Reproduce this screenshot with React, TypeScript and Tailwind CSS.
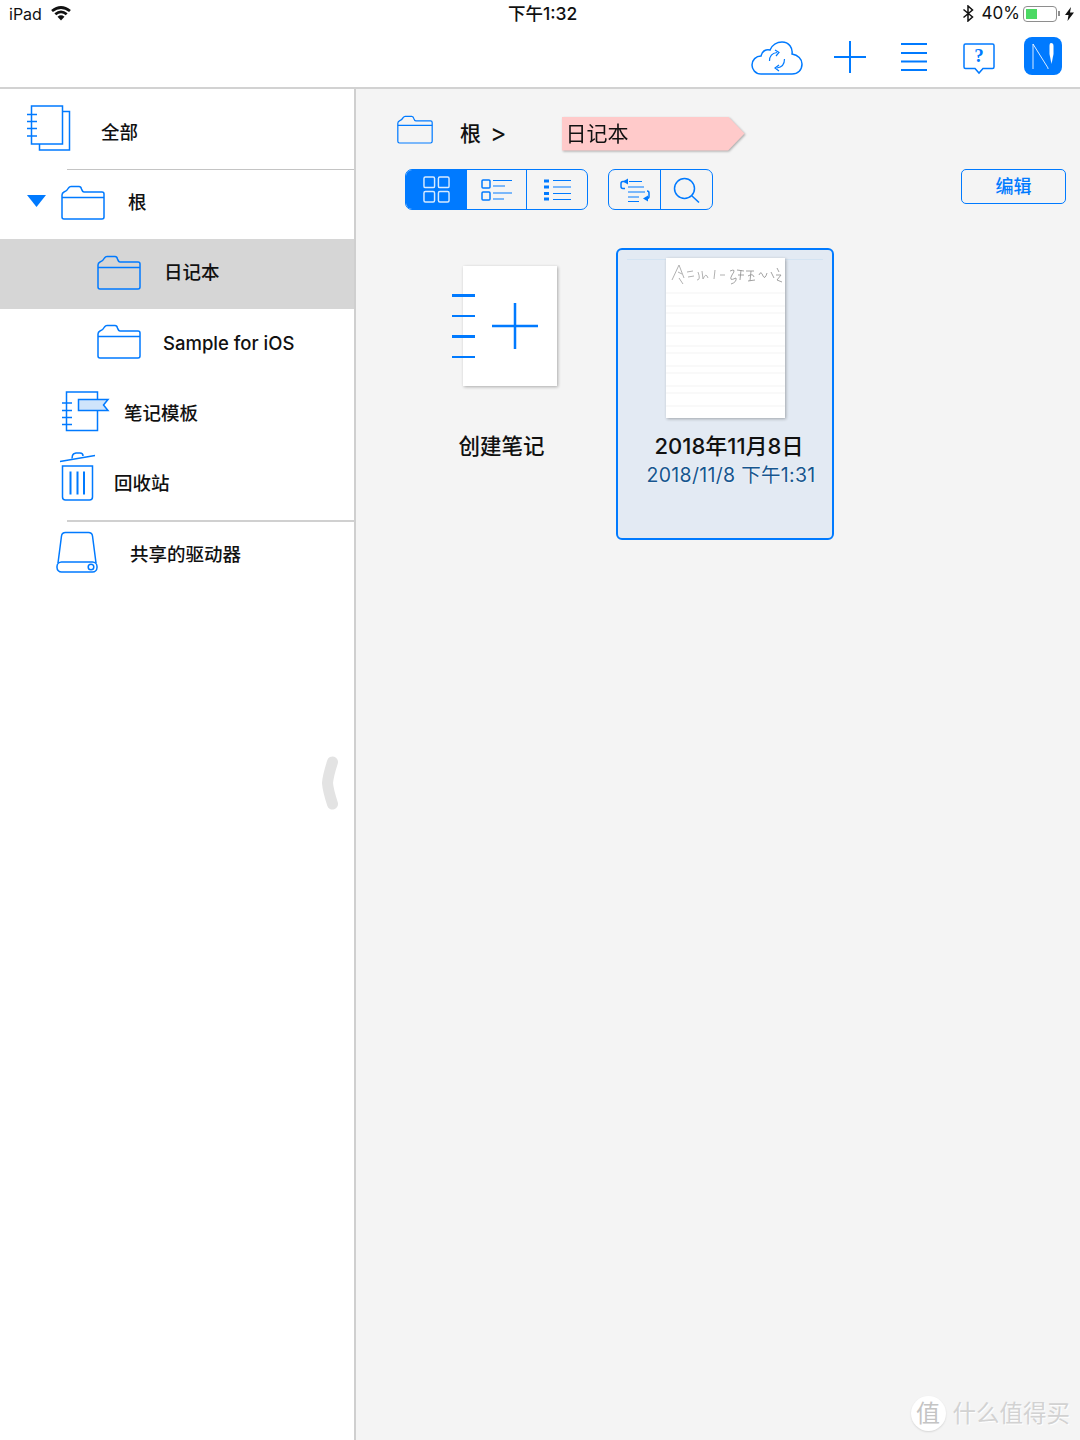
import type { ReactNode } from "react";

const BLUE = "#007aff";

function Icon({ w, h, children, className = "" }: { w: number; h: number; children: ReactNode; className?: string }) {
    return (
        <svg width={w} height={h} viewBox={`0 0 ${w} ${h}`} fill="none" stroke={BLUE} strokeWidth={1.5} className={`shrink-0 ${className}`}>
            {children}
        </svg>
    );
}

function Folder({ w = 44, h = 35, className = "" }: { w?: number; h?: number; className?: string }) {
    return (
        <svg width={w} height={h} viewBox="0 0 44 35" fill="none" stroke={BLUE} strokeWidth={1.5} className={`shrink-0 ${className}`}>
            <path d="M1 10 L1 32 Q1 34 3 34 L41 34 Q43 34 43 32 L43 9 Q43 7 41 7 L23 7 Q21.500 7 20.500 4 Q20 1.500 18 1.500 L10 1.500 Q8.500 1.500 7.500 3 Q6 6 3 7 Q1 8 1 10 Z" strokeLinejoin="round" />
            <path d="M1 12.500 L43 12.500" />
        </svg>
    );
}

function AllNotes() {
    return (
        <Icon w={46} h={46} className="mb-[2px]">
            <rect x="6.500" y="1" width="31" height="38" />
            <path d="M37.500 6.500 L44.500 6.500 L44.500 45 L14.500 45 L14.500 39" />
            <path d="M2 9.500 H12 M2 16.500 H12 M2 23.500 H12 M2 31 H12" />
        </Icon>
    );
}

function Template() {
    return (
        <Icon w={50} h={41} className="mb-[6px]">
            <path d="M37.500 8.500 V1 H6.500 V39.500 H37.500 V19.500" />
            <path d="M2 12 H12 M2 19.500 H12 M2 26.500 H12 M2 33.500 H12" />
            <path d="M18.500 8.500 L48 8.500 L43.500 14 L48 19.500 L18.500 19.500 Z" fill="#cfe4fb" />
        </Icon>
    );
}

function Trash() {
    return (
        <Icon w={37} h={50} className="mb-[16px]">
            <path d="M1 9.500 L36 3.500" />
            <path d="M13 6.500 L13.500 3.500 Q14 1.500 17 1 L21 1 Q24 1 24 4" />
            <path d="M3.500 14 L33.500 14 L33.500 45 Q33.500 48 30.500 48 L6.500 48 Q3.500 48 3.500 45 Z" />
            <path d="M11.500 19.500 V42.500 M18.500 19.500 V42.500 M25 19.500 V42.500" strokeWidth={2} />
        </Icon>
    );
}

function Drive() {
    return (
        <Icon w={42} h={42} className="mb-[6px]">
            <path d="M2 32 L5.500 5 Q6 1.500 9.500 1.500 L32.500 1.500 Q36 1.500 36.500 5 L40 32" />
            <rect x="1" y="31" width="40" height="10" rx="4.500" />
            <circle cx="35" cy="36" r="2.800" />
        </Icon>
    );
}

function SideRow({ icon, label, rowClass, textClass = "" }: { icon: ReactNode; label: string; rowClass: string; textClass?: string }) {
    return (
        <div className={`flex items-center ${rowClass}`}>
            {icon}
            <span className={`text-[18.500px] font-medium leading-none text-[#111] ${textClass}`}>{label}</span>
        </div>
    );
}

function Sidebar() {
    return (
        <aside className="relative w-[356px] shrink-0 border-r-2 border-[#cfcfcf] bg-white">
            <SideRow icon={<AllNotes />} label="全部" rowClass="h-[80px] pl-[25px] gap-[30px]" textClass="mt-[6px]" />
            <div className="ml-[67px] h-[1px] bg-[#c4c4c4]" />
            <div className="flex h-[69px] items-center pl-[27px]">
                <svg width="19" height="12" viewBox="0 0 19 12" className="mb-[7px] mr-[15px] shrink-0">
                    <path d="M0 0 H19 L9.500 12 Z" fill={BLUE} />
                </svg>
                <Folder className="mb-[5px]" />
                <span className="mb-[4px] ml-[23px] text-[18.500px] font-medium leading-none text-[#111]">根</span>
            </div>
            <SideRow icon={<Folder className="mb-[4px]" />} label="日记本" rowClass="h-[70px] pl-[97px] gap-[23px] bg-[#d6d6d6]" textClass="mb-[4px]" />
            <SideRow icon={<Folder className="mb-[6px]" />} label="Sample for iOS" rowClass="h-[70px] pl-[97px] gap-[22px]" textClass="mb-[2px]" />
            <SideRow icon={<Template />} label="笔记模板" rowClass="h-[70px] pl-[60px] gap-[14px]" textClass="mb-[2px]" />
            <SideRow icon={<Trash />} label="回收站" rowClass="h-[71px] pl-[59px] gap-[18px]" textClass="mb-[2px]" />
            <div className="ml-[67px] h-[2px] bg-[#d0d0d0]" />
            <SideRow icon={<Drive />} label="共享的驱动器" rowClass="h-[65px] pl-[56px] gap-[32px]" />
            <svg width="18" height="54" viewBox="0 0 18 54" className="absolute left-[321px] top-[667px]">
                <path d="M11.500 6 Q7 20 6.500 27 Q7 34 11.500 48" fill="none" stroke="#e3e3e3" strokeWidth="11" strokeLinecap="round" />
            </svg>
        </aside>
    );
}

function ViewTabs() {
    return (
        <div className="flex h-[41px] w-[183px] overflow-hidden rounded-[7px] border-[1.500px] border-[#007aff]">
            <div className="flex w-[60px] items-center justify-center bg-[#007aff]">
                <svg width="27" height="27" viewBox="0 0 28 28" fill="none" stroke="#fff" strokeOpacity=".85" strokeWidth="1.500">
                    <rect x="1" y="1" width="11" height="11" rx="1.500" />
                    <rect x="16" y="1" width="11" height="11" rx="1.500" />
                    <rect x="1" y="16" width="11" height="11" rx="1.500" />
                    <rect x="16" y="16" width="11" height="11" rx="1.500" />
                </svg>
            </div>
            <div className="flex w-[60px] items-center justify-center border-l-[1.500px] border-[#007aff]">
                <Icon w={32} h={24}>
                    <rect x="1" y="2" width="8" height="8" rx="1" />
                    <rect x="1" y="14" width="8" height="8" rx="1" />
                    <path d="M12 2.500 H31 M12 8 H24 M12 15 H31 M12 21 H23" strokeWidth={1.2} />
                </Icon>
            </div>
            <div className="flex flex-1 items-center justify-center border-l-[1.500px] border-[#007aff]">
                <Icon w={27} h={22}>
                    <path d="M0 2 H5 M0 8 H5 M0 14.500 H5 M0 20 H5" strokeWidth={3} />
                    <path d="M9 1.500 H27 M9 8 H27 M9 14.500 H27 M9 20.500 H27" strokeWidth={1.2} />
                </Icon>
            </div>
        </div>
    );
}

function ToolTabs() {
    return (
        <div className="ml-[20px] flex h-[41px] w-[105px] overflow-hidden rounded-[7px] border-[1.500px] border-[#007aff]">
            <div className="flex w-[51px] items-center justify-center">
                <Icon w={30} h={26}>
                    <path d="M8 1.500 L3 4.500 L8 7.500 Z" fill={BLUE} stroke="none" />
                    <path d="M6 4.500 H3 Q1 4.500 1 6.500 V9.500 Q1 11.500 3 11.500 H5" />
                    <path d="M9 4.500 H22 M8 10 H24 M8 15 H25 M8 20 H19 M8 24.500 H19" strokeWidth={1.2} />
                    <path d="M23 18.500 L28 21.500 L23 24.500 Z" fill={BLUE} stroke="none" transform="rotate(180 25.500 21.500)" />
                    <path d="M25 21.500 H27 Q29 21.500 29 19.500 V16 Q29 14 27 14" />
                </Icon>
            </div>
            <div className="flex flex-1 items-center justify-center border-l-[1.500px] border-[#007aff]">
                <Icon w={27} h={26}>
                    <circle cx="11.500" cy="11.500" r="10" />
                    <path d="M18.500 18.500 L26 25.500" />
                </Icon>
            </div>
        </div>
    );
}

function NewNote() {
    return (
        <div className="ml-[-16px] mt-[18px] flex w-[120px] flex-col items-center">
            <div className="relative ml-[14px] flex h-[120px] w-[94px] items-center justify-center bg-white shadow-[1px_1px_3px_rgba(0,0,0,.3)]">
                <div className="absolute left-[-11px] top-[28px] flex flex-col gap-[18px]">
                    <div className="h-[2.500px] w-[23px] bg-[#007aff]" />
                    <div className="h-[2.500px] w-[23px] bg-[#007aff]" />
                    <div className="h-[2.500px] w-[23px] bg-[#007aff]" />
                    <div className="h-[2.500px] w-[23px] bg-[#007aff]" />
                </div>
                <svg width="46" height="46" viewBox="0 0 46 46" className="ml-[10px]">
                    <path d="M0 23 H46 M23 0 V46" stroke={BLUE} strokeWidth="2.500" />
                </svg>
            </div>
            <span className="ml-[-3px] mt-[50px] text-[21.500px] font-medium leading-none text-[#111]">创建笔记</span>
        </div>
    );
}

function NoteCard() {
    return (
        <div className="relative ml-[53px] flex h-[292px] w-[218px] flex-col items-center rounded-[6px] border-2 border-[#007aff] bg-[#e3eaf3]">
            <div className="absolute left-[9px] right-[9px] top-[9px] h-[1px] bg-[#d3e3f2]" />
            <div className="relative mt-[8px] h-[160px] w-[119px] bg-white shadow-[1px_1px_3px_rgba(0,0,0,.3)]">
                <svg width="119" height="160" viewBox="0 0 119 160">
                    <path d="M0 35 H119 M0 48 H119 M0 55 H119 M0 68 H119 M0 75 H119 M0 88 H119 M0 95 H119 M0 108 H119 M0 115 H119 M0 128 H119 M0 135 H119 M0 148 H119" stroke="#f3f3f3" strokeWidth="1" />
                    <path d="M6 22 L13 7 L18 20 M12 14 L16 16 M13 20 L17 26 M21 14 L27 13 M22 19 L28 18 M32 14 Q35 22 31 22 M36 13 L37 21 Q40 14 42 20 M49 12 L48 21 M54 17 L59 17" stroke="#a8a8a8" strokeWidth=".9" fill="none" />
                    <path d="M64 13 Q71 10 66 17 Q62 24 70 20 Q71 24 65 26 M71 12 L78 13 M72 17 L78 17 M75 12 L74 22 M80 13 L88 13 M82 18 Q87 15 88 19 M85 13 L84 23 M82 23 L89 22 M93 17 Q95 12 97 18 Q99 22 101 15 M105 14 L108 20 M111 10 L113 14 M110 17 L115 17 L111 22 L116 24" stroke="#999" strokeWidth=".9" fill="none" />
                </svg>
            </div>
            <span className="mt-[17px] pl-[8px] text-[22px] font-medium leading-none text-[#111]">2018年11月8日</span>
            <span className="mt-[9px] whitespace-nowrap pl-[12px] text-[19.500px] leading-none tracking-[.3px] text-[#17568f] [text-shadow:0_0_2px_#fff]">2018/11/8 下午1:31</span>
        </div>
    );
}

export default function App() {
    return (
        <div className="relative flex h-[1440px] w-[1080px] flex-col overflow-hidden bg-white font-['Inter','Noto_Sans_CJK_SC',sans-serif]">
            <header className="h-[89px] shrink-0 border-b-2 border-[#d2d2d2] bg-white">
                <div className="relative flex h-[30px] items-center justify-between pb-[3px] pl-[9px] pr-[6px] text-[#111]">
                    <div className="flex items-center gap-[9px]">
                        <span className="text-[16px] leading-none">iPad</span>
                        <svg width="20" height="15" viewBox="0 0 20 15" fill="none" stroke="#111" strokeWidth="2.800">
                            <path d="M1 5 Q10 -2 19 5 M4.300 8.300 Q10 3.500 15.700 8.300" />
                            <path d="M6.500 10.700 Q10 8 13.500 10.700 L10 14.500 Z" fill="#111" stroke="none" />
                        </svg>
                    </div>
                    <span className="absolute left-[508px] text-[17.500px] font-medium leading-none">下午1:32</span>
                    <div className="flex items-center">
                        <svg width="12" height="17" viewBox="0 0 11 17" fill="none" stroke="#111" strokeWidth="1.500">
                            <path d="M1 4.500 L10 12 L5.500 16 V1 L10 5 L1 12.500" />
                        </svg>
                        <span className="ml-[8px] text-[17px] leading-none">40%</span>
                        <div className="ml-[3px] h-[16px] w-[34px] rounded-[4px] border border-[#8e8e8e] p-[2px]">
                            <div className="h-full w-[11px] bg-[#4cd964]" />
                        </div>
                        <div className="ml-[1px] h-[5px] w-[2px] bg-[#8e8e8e]" />
                        <svg width="9" height="14" viewBox="0 0 9 14" className="ml-[5px]">
                            <path d="M6 0 L0 8 H3.500 L2.500 14 L9 5.500 H5 Z" fill="#111" />
                        </svg>
                    </div>
                </div>
                <div className="flex items-center justify-end pr-[18px] pt-[7px]">
                    <Icon w={52} h={34} className="mt-[2px]">
                        <path d="M10 33 C4 33 1 28 1 24 C1 19 5 15 10 15 C11 10 15 8 19 9 C21 4 26 1 31 1 C38 1 42 7 41 13 C47 14 51 18 51 23 C51 29 47 33 41 33 Z" />
                        <path d="M18.500 20 Q18.500 12.500 26 11.500 M33.500 18 Q33.500 26 26 27" strokeWidth={1.2} />
                        <path d="M24 9 L28 11.500 L25 15 M28 24 L24 27 L28 30" strokeWidth={1.2} />
                    </Icon>
                    <svg width="32" height="32" viewBox="0 0 32 32" className="ml-[31px]">
                        <path d="M0 16 H32 M16 0 V32" stroke={BLUE} strokeWidth="2" />
                    </svg>
                    <svg width="26" height="28" viewBox="0 0 26 28" className="ml-[35px]">
                        <path d="M0 1 H26 M0 10 H26 M0 18.500 H26 M0 27 H26" stroke={BLUE} strokeWidth="2" />
                    </svg>
                    <div className="relative ml-[36px] mt-[4px] h-[32px] w-[32px]">
                        <svg width="32" height="32" viewBox="0 0 32 32" fill="none" stroke={BLUE} strokeWidth="1.500">
                            <path d="M2.500 1 H29.500 Q31 1 31 2.500 V24 Q31 25.500 29.500 25.500 H20 L16 30 L12 25.500 H2.500 Q1 25.500 1 24 V2.500 Q1 1 2.500 1 Z" />
                        </svg>
                        <span className="absolute inset-x-0 top-[3px] text-center font-['Liberation_Serif',serif] text-[19px] font-bold leading-none text-[#007aff]">?</span>
                    </div>
                    <div className="mb-[2px] ml-[29px] flex h-[38px] w-[38px] items-center justify-center rounded-[8px] bg-[#007aff]">
                        <svg width="26" height="28" viewBox="0 0 26 28" fill="none" stroke="#fff" strokeOpacity=".85">
                            <path d="M3 27 V2 L18 26 V27" strokeWidth="1" />
                            <path d="M21 1 Q23.500 1 23.500 4 V12 L21.500 22 L19.500 12 V4 Q19.500 1 21 1 Z" fill="#fff" stroke="none" />
                        </svg>
                    </div>
                </div>
            </header>
            <div className="flex min-h-0 flex-1">
                <Sidebar />
                <main className="relative flex-1 bg-[#f4f4f4] pl-[41px] pt-[26px]">
                    <div className="flex h-[37px] items-center">
                        <Folder w={36} h={29} className="mb-[8px]" />
                        <span className="ml-[27px] text-[21px] font-medium leading-none text-[#111]">根</span>
                        <span className="ml-[9px] text-[25px] leading-none text-[#111]">&gt;</span>
                        <div className="ml-[55px] drop-shadow-[1px_1px_1px_rgba(0,0,0,.3)]">
                            <div className="flex h-[34px] w-[183px] items-center bg-[#ffcaca] pl-[4px] text-[21px] leading-none text-[#111] [clip-path:polygon(0_0,91%_0,100%_50%,91%_100%,0_100%)]">
                                日记本
                            </div>
                        </div>
                    </div>
                    <div className="mt-[17px] flex items-start pl-[8px] pr-[14px]">
                        <ViewTabs />
                        <ToolTabs />
                        <button className="ml-auto h-[35px] w-[105px] rounded-[5px] border-[1.500px] border-[#007aff] text-[18px] font-medium leading-none text-[#007aff]">
                            编辑
                        </button>
                    </div>
                    <div className="mt-[38px] flex items-start pl-[62px]">
                        <NewNote />
                        <NoteCard />
                    </div>
                    <div className="absolute bottom-[9px] right-[10px] flex items-center gap-[7px] text-[#d2d2d2] [text-shadow:1px_1px_1px_#fff]">
                        <span className="flex h-[35px] w-[35px] items-center justify-center rounded-full bg-white text-[24px] leading-none text-[#c4c4c4] shadow-[0_1px_2px_rgba(0,0,0,.12)]">值</span>
                        <span className="text-[23.500px] leading-none">什么值得买</span>
                    </div>
                </main>
            </div>
        </div>
    );
}
